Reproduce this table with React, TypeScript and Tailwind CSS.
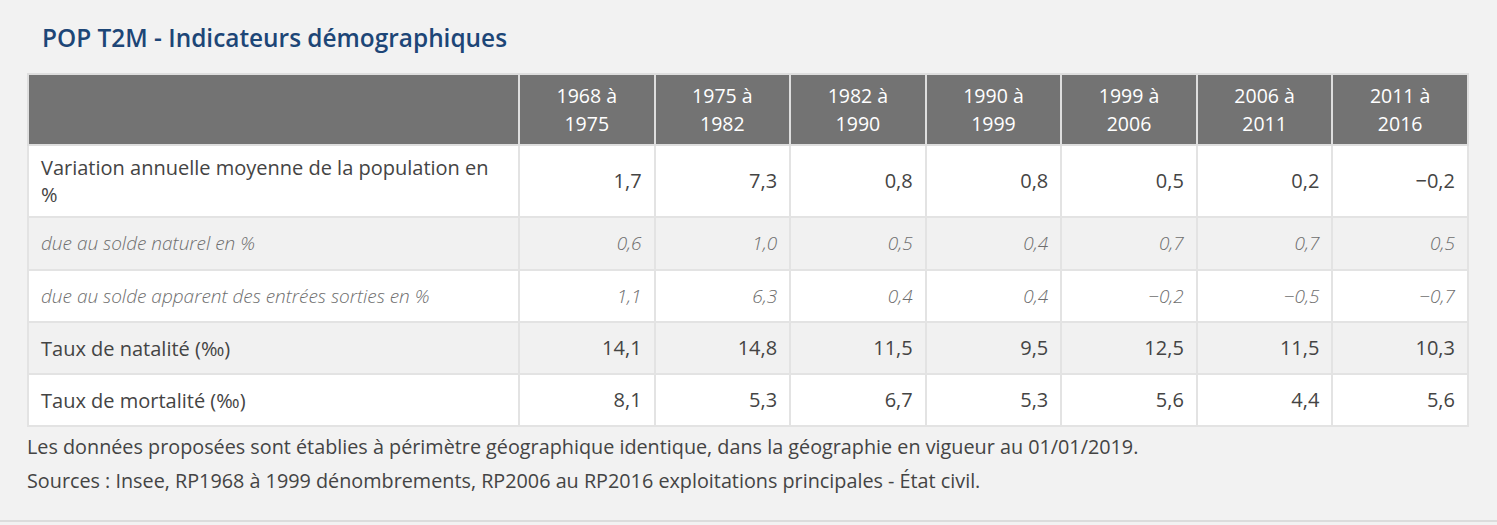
import React from "react";

const headers = [
  ["1968 à", "1975"],
  ["1975 à", "1982"],
  ["1982 à", "1990"],
  ["1990 à", "1999"],
  ["1999 à", "2006"],
  ["2006 à", "2011"],
  ["2011 à", "2016"],
];

type Row = { label: string; values: string[]; italic?: boolean; h: string };

const rows: Row[] = [
  { label: "Variation annuelle moyenne de la population en %", values: ["1,7", "7,3", "0,8", "0,8", "0,5", "0,2", "−0,2"], h: "h-[72px]" },
  { label: "due au solde naturel en %", values: ["0,6", "1,0", "0,5", "0,4", "0,7", "0,7", "0,5"], italic: true, h: "h-[53px]" },
  { label: "due au solde apparent des entrées sorties en %", values: ["1,1", "6,3", "0,4", "0,4", "−0,2", "−0,5", "−0,7"], italic: true, h: "h-[52px]" },
  { label: "Taux de natalité (‰)", values: ["14,1", "14,8", "11,5", "9,5", "12,5", "11,5", "10,3"], h: "h-[52px]" },
  { label: "Taux de mortalité (‰)", values: ["8,1", "5,3", "6,7", "5,3", "5,6", "4,4", "5,6"], h: "h-[52px]" },
];

export default function App() {
  return (
    <div className="w-[1497px] h-[525px] bg-[#f2f2f2] font-['Open_Sans',sans-serif] relative overflow-hidden">
      <div className="pl-[27px] pr-[30px] pt-[21px]">
        <h2 className="pl-[15px] text-[24.4px] leading-[34px] font-semibold text-[#1d4677]">
          POP T2M - Indicateurs démographiques
        </h2>
        <table className="mt-[18px] w-[1440px] border-collapse table-fixed">
          <colgroup>
            <col className="w-[491px]" />
            {headers.map((_, i) => (
              <col key={i} className="w-[135.57px]" />
            ))}
          </colgroup>
          <thead>
            <tr className="h-[71px] bg-[#737373]">
              <th className="border-2 border-[#dedede]"></th>
              {headers.map((h, i) => (
                <th key={i} className="border-2 border-[#dedede] text-white font-normal text-[19.5px] leading-[28px] text-center align-middle">
                  {h[0]}
                  <br />
                  {h[1]}
                </th>
              ))}
            </tr>
          </thead>
          <tbody>
            {rows.map((r, ri) => (
              <tr key={ri} className={`${r.h} ${ri % 2 === 1 ? "bg-[#f1f1f1]" : "bg-white"}`}>
                <td
                  className={`border-2 border-[#e3e3e3] pl-[12px] pr-[20px] leading-[27px] align-middle ${
                    r.italic ? "italic font-light text-[#6e6e6e] text-[19px]" : "text-[#444444] text-[20px]"
                  }`}
                >
                  {r.label}
                </td>
                {r.values.map((v, vi) => (
                  <td
                    key={vi}
                    className={`border-2 border-[#e3e3e3] pr-[12px] text-right align-middle ${
                      r.italic ? "italic font-light text-[#6e6e6e] text-[19px]" : "text-[#444444] text-[20px]"
                    }`}
                  >
                    {v}
                  </td>
                ))}
              </tr>
            ))}
          </tbody>
        </table>
        <div className="mt-[3px] text-[19.8px] leading-[34px] text-[#444444]">
          <p>Les données proposées sont établies à périmètre géographique identique, dans la géographie en vigueur au 01/01/2019.</p>
          <p>Sources : Insee, RP1968 à 1999 dénombrements, RP2006 au RP2016 exploitations principales - État civil.</p>
        </div>
      </div>
      <div className="absolute left-0 right-0 top-[520px] h-[2px] bg-[#dcdcdc]"></div>
    </div>
  );
}
